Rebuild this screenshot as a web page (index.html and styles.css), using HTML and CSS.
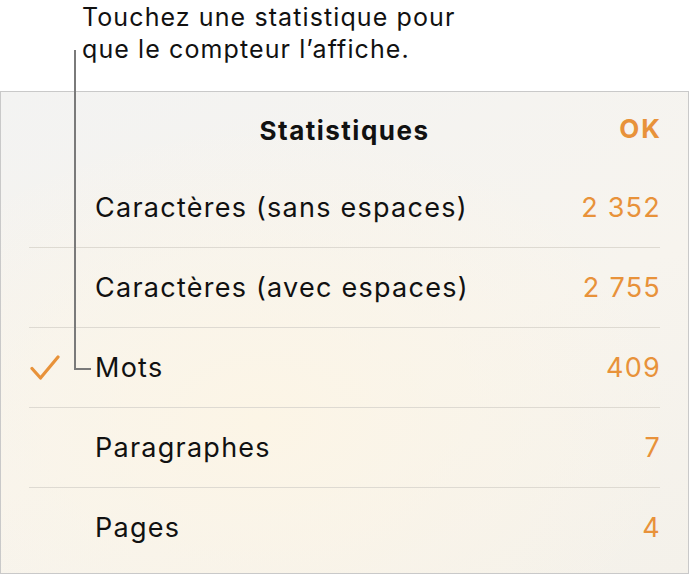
FILE: index.html
```html
<!DOCTYPE html>
<html lang="fr">
<head>
    <meta charset="UTF-8">
    <meta name="viewport" content="width=device-width, initial-scale=1.0">
    <title>Statistiques</title>
    <link rel="stylesheet" href="styles.css">
</head>
<body>
    <div class="callout">
        Touchez une statistique pour<br>
        que le compteur l’affiche.
    </div>
    <div class="callout-line"></div>

    <div class="panel">
        <div class="panel-header">
            <span class="panel-title">Statistiques</span>
            <span class="panel-done">OK</span>
        </div>

        <div class="stat-row">
            <span class="stat-check"></span>
            <span class="stat-label">Caractères (sans espaces)</span>
            <span class="stat-value">2 352</span>
        </div>
        <div class="stat-row">
            <span class="stat-check"></span>
            <span class="stat-label">Caractères (avec espaces)</span>
            <span class="stat-value">2 755</span>
        </div>
        <div class="stat-row">
            <span class="stat-check">
                <svg width="32" height="26" viewBox="0 0 32 26">
                    <path d="M3 13.5 L11.5 23 L29 2" fill="none" stroke="#e8923a" stroke-width="3.2" stroke-linecap="round" stroke-linejoin="round"/>
                </svg>
            </span>
            <span class="stat-label">Mots</span>
            <span class="stat-value">409</span>
        </div>
        <div class="stat-row">
            <span class="stat-check"></span>
            <span class="stat-label">Paragraphes</span>
            <span class="stat-value">7</span>
        </div>
        <div class="stat-row">
            <span class="stat-check"></span>
            <span class="stat-label">Pages</span>
            <span class="stat-value">4</span>
        </div>
    </div>
</body>
</html>
```

FILE: styles.css
```css
body {
    font-family: Inter, Roboto, "Liberation Sans", sans-serif;
    background-color: #ffffff;
    color: #111111;
    margin: 0;
    padding: 0;
    width: 689px;
    height: 575px;
    position: relative;
    overflow: hidden;
}

.callout {
    padding: 1px 0 0 82px;
    height: 90px;
    font-size: 25px;
    line-height: 32px;
    letter-spacing: 1.1px;
    color: #111111;
}

.callout-line {
    position: absolute;
    left: 74px;
    top: 50px;
    width: 15px;
    height: 318px;
    border-left: 2px solid #7a7a7a;
    border-bottom: 2px solid #7a7a7a;
}

.panel {
    box-sizing: border-box;
    width: 689px;
    height: 483px;
    border: 1px solid #c9c9c9;
    background:
        radial-gradient(ellipse 420px 300px at 260px 330px, #fcf5e6 0%, rgba(252, 245, 230, 0) 100%),
        linear-gradient(160deg, #f3f3f2 0%, #f7f4ee 55%, #f4f1ea 100%);
    padding-bottom: 5px;
}

.panel-header {
    height: 76px;
    display: flex;
    align-items: center;
    justify-content: center;
    position: relative;
    margin: 0 28px;
}

.panel-title {
    font-size: 26px;
    font-weight: 700;
    letter-spacing: 1.5px;
}

.panel-done {
    position: absolute;
    right: -2px;
    top: 21px;
    font-size: 26px;
    font-weight: 700;
    letter-spacing: 2px;
    color: #e8923a;
}

.stat-row {
    display: flex;
    align-items: center;
    height: 79px;
    margin: 0 28px;
    border-bottom: 1px solid #dedad2;
    font-size: 27px;
    letter-spacing: 1.25px;
}

.stat-row:last-child {
    border-bottom: none;
}

.stat-check {
    width: 66px;
    display: flex;
    align-items: center;
}

.stat-label {
    flex: 1;
}

.stat-value {
    color: #e8923a;
    margin-right: -1px;
}
```
